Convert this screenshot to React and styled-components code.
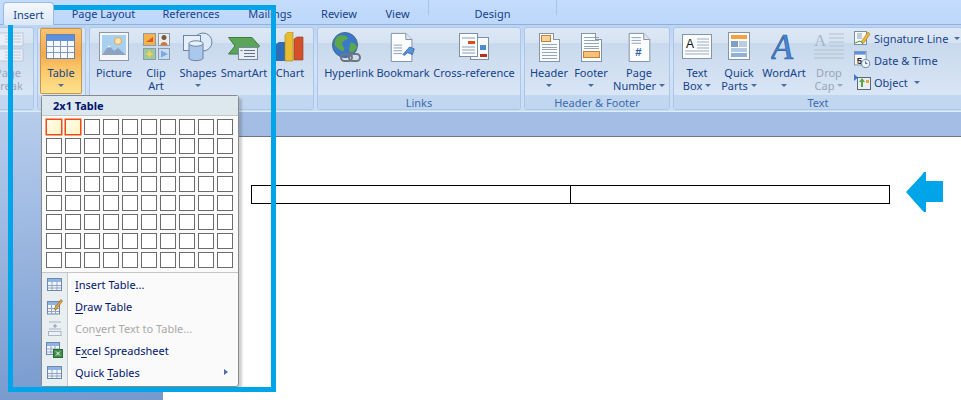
import React from "react";
import styled, { createGlobalStyle } from "styled-components";

const Global = createGlobalStyle`
  html, body { margin: 0; padding: 0; background: #fff; }
  body { width: 961px; height: 400px; overflow: hidden; font-family: "Noto Sans", "Open Sans", sans-serif; font-size: 11px; }
`;

const Shell = styled.div`
  position: relative;
  width: 961px;
  height: 400px;
  overflow: hidden;
  display: flex;
  flex-direction: column;
`;

const TabBar = styled.div`
  display: flex;
  height: 24px;
  flex: none;
  padding-left: 3px;
  background: linear-gradient(#c4dcfc, #bcd7fb);
`;

const Tab = styled.div`
  position: relative;
  width: ${(p) => p.$w}px;
  box-sizing: border-box;
  display: flex;
  align-items: center;
  justify-content: center;
  padding-top: 3px;
  color: #15428b;
  font-size: 11px;
  ${(p) => p.$active && `
    margin-top: 2px;
    height: 23px;
    z-index: 1;
    padding-top: 0;
    background: linear-gradient(#f4f8fd, #dce8f7);
    border: 1px solid #9cb9de;
    border-bottom: none;
    border-radius: 4px 4px 0 0;
  `}
  ${(p) => p.$context && `
    &::before, &::after {
      content: "";
      position: absolute;
      top: 0;
      width: 1px;
      height: 15px;
      background: #a6c3ea;
    }
    &::before { left: 0; }
    &::after { right: 0; }
  `}
`;

const Ribbon = styled.div`
  display: flex;
  gap: 3px;
  flex: none;
  height: 88px;
  box-sizing: border-box;
  padding: 2px 0 1px;
  background: linear-gradient(#bcd4f2, #d3e4f8 45%, #c9dcf4);
  border-top: 1px solid #8fb2dd;
  border-bottom: 1px solid #d6f0f4;
`;

const Group = styled.section`
  width: ${(p) => p.$w}px;
  margin-left: ${(p) => p.$ml || 0}px;
  flex: none;
  box-sizing: border-box;
  display: flex;
  flex-direction: column;
  border: 1px solid #aac6e8;
  border-radius: 3px;
  overflow: hidden;
  background: linear-gradient(#dde8f5, #d6e3f2 18%, #c9d9ed 19%, #d3e1f2 62%, #dceafa);
`;

const GroupBody = styled.div`
  flex: 1;
  display: flex;
  padding-left: ${(p) => p.$pl || 0}px;
`;

const GroupLabel = styled.div`
  flex: none;
  height: 14px;
  line-height: 15px;
  text-align: center;
  color: #3e6aaa;
  font-size: 11px;
  background: linear-gradient(#c2d8f1, #c0d6f0);
`;

const BigButton = styled.div`
  width: ${(p) => p.$w}px;
  height: 66px;
  flex: none;
  box-sizing: border-box;
  display: flex;
  flex-direction: column;
  align-items: center;
  color: ${(p) => (p.$off ? "#98a6b9" : "#15428b")};
  white-space: nowrap;
  ${(p) => p.$active && `
    background: linear-gradient(#f8c374, #f6a94f 40%, #fbc566 60%, #fde38f);
    box-shadow: inset 0 0 0 1px #c2974f;
    border-radius: 2px;
  `}
`;

const IconSlot = styled.div`
  height: 38px;
  flex: none;
  display: flex;
  align-items: center;
  justify-content: center;
  padding-bottom: 1px;
  box-sizing: border-box;
`;

const LabelLine = styled.div`
  height: 13px;
  line-height: 13px;
  font-size: 11px;
  display: flex;
  align-items: center;
  gap: 3px;
`;

const Caret = styled.span`
  width: 0;
  height: 0;
  border-left: 3px solid transparent;
  border-right: 3px solid transparent;
  border-top: 3px solid ${(p) => (p.$off ? "#9aa8bb" : "#4d6c9e")};
`;

const Stack = styled.div`
  display: flex;
  flex-direction: column;
  margin: -1px 0 0 4px;
`;

const StackRow = styled.div`
  height: 22px;
  display: flex;
  align-items: center;
  color: #15428b;
  white-space: nowrap;
  gap: 3px;
`;

const StackIcon = styled.span`
  width: 17px;
  flex: none;
  display: flex;
  justify-content: center;
`;

const StackCaret = styled(Caret)`
  margin-left: 3px;
`;

const Workspace = styled.div`
  flex: 1;
  display: flex;
  min-height: 0;
  background: linear-gradient(176deg, #b7cdec, #a0bbe3 30%, #6a8fc6);
`;

const Backstage = styled.div`
  flex: 1;
  display: flex;
  flex-direction: column;
  background: linear-gradient(#a3bde4, #9ab5dd);
  padding-top: 24px;
  margin-left: 163px;
`;

const Page = styled.div`
  flex: 1;
  background: #fff;
  border-top: 1px solid #6d7684;
  display: flex;
  align-items: flex-start;
  gap: 16px;
  padding: 35px 0 0 88px;
`;

const DocTable = styled.table`
  width: 639px;
  height: 19px;
  margin-top: 13px;
  border-collapse: collapse;
  table-layout: fixed;
  td { border: 1px solid #000; padding: 0; }
`;

const Menu = styled.div`
  position: absolute;
  left: 41px;
  top: 95px;
  width: 198px;
  height: 292px;
  box-sizing: border-box;
  background: #fafafa;
  border: 1px solid #8a8a8a;
  border-radius: 3px;
  box-shadow: 3px 3px 2px rgba(70, 70, 70, 0.25);
  display: flex;
  flex-direction: column;
`;

const MenuTitle = styled.div`
  height: 20px;
  flex: none;
  box-sizing: border-box;
  padding-left: 11px;
  line-height: 19px;
  background: #dde7ee;
  border-bottom: 1px solid #c5c5c5;
  color: #00156e;
  font-weight: 700;
  font-size: 11px;
`;

const CellGrid = styled.div`
  display: grid;
  grid-template-columns: repeat(10, 16px);
  grid-auto-rows: 16px;
  gap: 3px;
  padding: 3px 0 0 4px;
`;

const Cell = styled.div`
  box-sizing: border-box;
  background: ${(p) => (p.$on ? "linear-gradient(135deg, #fffdec, #fff3c4)" : "#fff")};
  border: 1px solid #6b6b6b;
  ${(p) => p.$on && `
    border-color: #ef4c10;
    box-shadow: 0 0 0 0.5px #ef4c10;
  `}
`;

const MenuRule = styled.div`
  height: 1px;
  flex: none;
  margin-top: 4px;
  background: #c5c5c5;
`;

const MenuList = styled.div`
  flex: 1;
  display: flex;
  flex-direction: column;
  background: linear-gradient(90deg, #e9eef0 25px, #c5c9cc 25px, #c5c9cc 26px, transparent 26px);
`;

const MenuItem = styled.div`
  height: 22px;
  display: flex;
  align-items: center;
  color: ${(p) => (p.$off ? "#a9a9a9" : "#00156e")};
  position: relative;
  u { text-underline-offset: 2px; }
`;

const MenuIcon = styled.span`
  width: 33px;
  flex: none;
  display: flex;
  justify-content: center;
  padding-right: 8px;
  box-sizing: border-box;
`;

const SubArrow = styled.span`
  position: absolute;
  right: 10px;
  border-top: 3.5px solid transparent;
  border-bottom: 3.5px solid transparent;
  border-left: 4px solid #4a6ea5;
`;

const Frame = styled.div`
  position: absolute;
  left: 8px;
  top: 5px;
  width: 268px;
  height: 387px;
  box-sizing: border-box;
  border: 5px solid #00a4e8;
  pointer-events: none;
`;

const Doc = ({ children }) => (
  <>
    <path d="M1.5 1.5H17L23.5 8V31.5H1.5Z" fill="#fbfcfe" stroke="#7d8ea5" />
    <path d="M17 1.5V8H23.5" fill="#dfe6ee" stroke="#7d8ea5" />
    {children}
  </>
);

const lines = (x1, x2, ys, color = "#8c9fb8") =>
  ys.map((y) => <path key={y} d={`M${x1} ${y}H${x2}`} stroke={color} />);

const TableGlyph = () => (
  <svg width="15" height="13" viewBox="0 0 15 13">
    <rect x=".5" y=".5" width="14" height="12" fill="#f2f6fb" stroke="#6d88ad" />
    <rect x="1" y="1" width="13" height="3" fill="#8fb4e4" />
    <path d="M1 7.500H14M1 10H14M5 4V12M10 4V12" stroke="#8ea7c9" />
  </svg>
);

const icons = {
  pageBreak: (
    <svg width="34" height="30" viewBox="0 0 34 30">
      <rect x="0" y="1" width="32" height="13" fill="#e8eef6" stroke="#bcc8d8" />
      <rect x="0" y="17" width="32" height="12" fill="#e8eef6" stroke="#bcc8d8" />
      {lines(14, 30, [4, 7, 10, 20, 23, 26], "#c0cad8")}
    </svg>
  ),
  table: (
    <svg width="30" height="26" viewBox="0 0 30 26">
      <rect x=".5" y=".5" width="28" height="24" fill="#f6f8fb" stroke="#6885ad" />
      <rect x="1" y="1" width="27" height="6" fill="#5d8fdc" />
      <path d="M1 12.500H28M1 18.500H28M7.500 7V24M14.500 7V24M21.500 7V24" stroke="#8298b8" />
    </svg>
  ),
  picture: (
    <svg width="31" height="30" viewBox="0 0 31 30">
      <rect x=".5" y=".5" width="29" height="28" fill="#f4f6f8" stroke="#8c97a5" />
      <rect x="3" y="3" width="24" height="20" fill="#a8d0f0" />
      <circle cx="19" cy="9" r="3.500" fill="#fbe7a3" stroke="#eaa05a" />
      <path d="M3 23L10 13L15 19L19 16L27 23Z" fill="#8ea3c2" />
      <path d="M8 16L10 13L12 15.500L10 15Z" fill="#fff" />
    </svg>
  ),
  clipArt: (
    <svg width="27" height="27" viewBox="0 0 27 27">
      <rect x=".5" y=".5" width="12" height="12" fill="#f3b34a" stroke="#8f9aa8" />
      <path d="M3 9L10 4V9Z" fill="#d9592a" />
      <rect x="15.500" y=".5" width="11" height="12" fill="#e9eef4" stroke="#8f9aa8" />
      <circle cx="21" cy="4.500" r="2.500" fill="#7a5a3a" />
      <path d="M17.500 12C17.500 8 24.500 8 24.500 12Z" fill="#d9732a" />
      <rect x=".5" y="15.500" width="12" height="11" fill="#9cc99b" stroke="#8f9aa8" />
      <path d="M6.500 17L8 20L11 21L8 22L6.500 25L5 22L2 21L5 20Z" fill="#f2d35e" />
      <rect x="15.500" y="15.500" width="11" height="11" fill="#c4dcf5" stroke="#8f9aa8" />
      <path d="M18 17.500L25 21L18 24.500Z" fill="#7ba9e0" />
    </svg>
  ),
  shapes: (
    <svg width="30" height="30" viewBox="0 0 30 30">
      <circle cx="20" cy="10" r="9" fill="#dce9f7" stroke="#6c84a5" />
      <rect x=".5" y="3.500" width="17" height="15" fill="#e6eef8" stroke="#6c84a5" />
      <path d="M6 11.500V26C6 29.500 20 29.500 20 26V11.500Z" fill="#a9c8ec" stroke="#6c84a5" />
      <ellipse cx="13" cy="11.500" rx="7" ry="2.700" fill="#e8f1fb" stroke="#6c84a5" />
    </svg>
  ),
  smartArt: (
    <svg width="32" height="26" viewBox="0 0 32 26">
      <path d="M.5 3.500H24L31.500 12L24 20H.5L7 12Z" fill="#5aa55a" stroke="#3e7e3e" />
      <rect x="10.500" y="13.500" width="19" height="12" fill="#e7ecf2" stroke="#7a8a9e" />
      {lines(16, 27, [16.5, 19.5, 22.5], "#5c7391")}
      <rect x="12.500" y="16" width="2" height="1" fill="#5c7391" />
    </svg>
  ),
  chart: (
    <svg width="28" height="30" viewBox="0 0 28 30">
      <path d="M0 12L3 10H9V29H0Z" fill="#2f6cb8" />
      <path d="M9 3L12 0H17V29H9Z" fill="#e9bb2e" stroke="#a8851c" strokeWidth=".6" />
      <path d="M18 7L21 5H27V28H18Z" fill="#d4502a" stroke="#9b3618" strokeWidth=".6" />
    </svg>
  ),
  hyperlink: (
    <svg width="34" height="30" viewBox="0 0 34 30">
      <circle cx="13" cy="13" r="12.500" fill="#3a78c8" stroke="#46648c" />
      <path d="M4 6C8 2 13 3 16 6C14 9 11 8 10 11C10 14 13 15 12 19C9 20 6 16 3 14C2 11 3 8 4 6ZM18 11C21 10 24 12 25 15C24 19 20 21 18 20C16 17 19 14 18 11Z" fill="#5ea64a" />
      <rect x="9" y="22" width="11" height="7" rx="3.500" fill="none" stroke="#6e7680" strokeWidth="2" />
      <rect x="17" y="22" width="11" height="7" rx="3.500" fill="none" stroke="#6e7680" strokeWidth="2" />
    </svg>
  ),
  bookmark: (
    <svg width="28" height="30" viewBox="0 0 28 32">
      <Doc>
        {lines(4, 13, [14, 17, 20, 23])}
        <path d="M14 24L21 16L26 18L24 24L19 22L15 25Z" fill="#5b93d6" stroke="#396fae" />
      </Doc>
    </svg>
  ),
  crossRef: (
    <svg width="31" height="27" viewBox="0 0 31 27">
      <rect x="11.500" y="4.500" width="18" height="22" fill="#f8f9fb" stroke="#7d8ea5" />
      <rect x="21" y="21" width="7" height="3" fill="#b9301a" />
      <path d="M21 12H27V17H21Z" fill="#4a8ad0" />
      <rect x=".5" y=".5" width="18" height="23" fill="#fbfcfe" stroke="#7d8ea5" />
      <rect x="9" y="8" width="7" height="3" fill="#df4a1c" />
      {lines(3, 16, [5, 14, 17, 20])}
    </svg>
  ),
  header: (
    <svg width="25" height="30" viewBox="0 0 25 32" shapeRendering="crispEdges">
      <Doc>
        <rect x="4" y="4" width="10" height="6" fill="#f5d49a" stroke="#c6782a" />
        {lines(4, 21, [13, 16, 19, 22, 25, 28])}
      </Doc>
    </svg>
  ),
  footer: (
    <svg width="25" height="30" viewBox="0 0 25 32" shapeRendering="crispEdges">
      <Doc>
        {lines(4, 21, [6, 9, 12, 15, 18])}
        <rect x="4" y="21" width="17" height="6" fill="#f5c27a" stroke="#c6782a" />
      </Doc>
    </svg>
  ),
  pageNumber: (
    <svg width="25" height="30" viewBox="0 0 25 32">
      <Doc>
        {lines(4, 14, [6, 9, 12])}
        <text x="8" y="26" fontFamily="Liberation Sans" fontWeight="700" fontSize="12" fill="#2d5da3">#</text>
      </Doc>
    </svg>
  ),
  textBox: (
    <svg width="31" height="26" viewBox="0 0 31 26">
      <rect x=".5" y=".5" width="29" height="24" fill="#fafbfc" stroke="#8795a8" />
      <text x="4" y="14" fontFamily="Liberation Sans" fontSize="12" fill="#111">A</text>
      {lines(15, 27, [5, 8, 11, 14], "#9bacc0")}
      {lines(3, 27, [17, 20], "#9bacc0")}
    </svg>
  ),
  quickParts: (
    <svg width="23" height="29" viewBox="0 0 23 29">
      <rect x=".5" y=".5" width="21" height="27" fill="#f8fafc" stroke="#8795a8" />
      <rect x="3" y="3" width="16" height="4" fill="#f2a33c" />
      <rect x="3" y="9" width="7" height="6" fill="#7f9fc4" />
      {lines(11, 19, [10, 12, 14], "#7f9fc4")}
      {lines(3, 19, [17, 19], "#6f96c8")}
      <rect x="3" y="21" width="16" height="4" fill="#8fb0d8" />
    </svg>
  ),
  wordArt: (
    <svg width="26" height="30" viewBox="0 0 26 30">
      <text x="0" y="27" fontFamily="Liberation Serif" fontStyle="italic" fontSize="36" fill="#4a86d0" stroke="#2c5d9e" strokeWidth=".7">A</text>
    </svg>
  ),
  dropCap: (
    <svg width="31" height="30" viewBox="0 0 31 30">
      <text x="0" y="14" fontFamily="Liberation Serif" fontSize="17" fill="#a8b4c4">A</text>
      {lines(15, 30, [2, 6, 10, 14], "#b5c0cf")}
      {lines(0, 30, [18, 22, 26], "#b5c0cf")}
    </svg>
  ),
  signature: (
    <svg width="17" height="16" viewBox="0 0 17 16">
      <rect x=".5" y="1.500" width="12" height="13" fill="#f7f8fa" stroke="#7d8ea5" />
      {lines(3, 8, [4, 6, 8], "#8c9fb8")}
      <path d="M7 12L14 2L16 4L10 13Z" fill="#e8b93a" stroke="#a8791c" strokeWidth=".6" />
      <path d="M1 13L6 11L9 14" fill="none" stroke="#4e9a3a" />
    </svg>
  ),
  date: (
    <svg width="19" height="20" viewBox="0 0 19 20">
      <rect x=".5" y=".5" width="13" height="15" fill="#f7f8fa" stroke="#7d8ea5" />
      <rect x="1" y="1" width="12" height="3" fill="#5d8fdc" />
      <text x="3" y="14" fontFamily="Liberation Sans" fontWeight="700" fontSize="11" fill="#222">5</text>
      <circle cx="13" cy="14" r="4.500" fill="#eef3f9" stroke="#5a7ca8" />
      <path d="M13 11.500V14H15" fill="none" stroke="#33527c" />
    </svg>
  ),
  object: (
    <svg width="17" height="17" viewBox="0 0 17 17">
      <path d="M0 0L4 3.500L0 7Z" fill="#3f78c9" />
      <rect x="3.500" y="3.500" width="13" height="12" fill="#e9eef4" stroke="#5b6a7d" />
      <path d="M8 4L11 8H9V13H7V8H5Z" fill="#5aa53e" />
      <rect x="12" y="6" width="3" height="3" fill="#e4a83a" />
    </svg>
  ),
  draw: (
    <svg width="16" height="17" viewBox="0 0 16 17">
      <rect x=".5" y="3.500" width="12" height="12.500" fill="#f2f6fb" stroke="#6d88ad" />
      <rect x="1" y="4" width="11" height="3" fill="#8fb4e4" />
      <path d="M1 10.500H12M1 13.500H12M4.500 7V16M8.500 7V16" stroke="#8ea7c9" />
      <path d="M7 11L14 1.500L15.500 3L9 12Z" fill="#e8a63a" stroke="#8a5a1a" strokeWidth=".6" />
    </svg>
  ),
  convert: (
    <svg width="14" height="15" viewBox="0 0 14 15">
      {lines(1, 13, [1], "#a8b6c8")}
      <path d="M7 3V7M5 5H9" stroke="#8a99ac" />
      {lines(1, 13, [8], "#a8b6c8")}
      <rect x=".5" y="10.500" width="12.500" height="4" fill="#eef1f5" stroke="#a8b6c8" />
    </svg>
  ),
  excel: (
    <svg width="17" height="16" viewBox="0 0 17 16">
      <rect x=".5" y=".5" width="13" height="12" fill="#f2f6fb" stroke="#6d88ad" />
      <rect x="1" y="1" width="12" height="3" fill="#8fb4e4" />
      <path d="M1 7H13M1 10H13M5 4V13M9 4V13" stroke="#8ea7c9" />
      <rect x="7.500" y="7.500" width="9" height="8" fill="#3f8f4a" stroke="#2a6a34" />
      <path d="M10 9.500L14 13.500M14 9.500L10 13.500" stroke="#fff" />
    </svg>
  ),
};

const groups = [
  { w: 54, ml: -20, pl: 3, label: "", items: [{ w: 48, icon: "pageBreak", lines: ["Page", "Break"], off: true }] },
  { w: 49, pl: 2, label: "Tables", items: [{ w: 42, icon: "table", lines: ["Table", ""], active: true }] },
  {
    w: 225, label: "Illustrations", items: [
      { w: 48, icon: "picture", lines: ["Picture"] },
      { w: 36, icon: "clipArt", lines: ["Clip", "Art"] },
      { w: 48, icon: "shapes", lines: ["Shapes", ""] },
      { w: 44, icon: "smartArt", lines: ["SmartArt"] },
      { w: 48, icon: "chart", lines: ["Chart"] },
    ],
  },
  {
    w: 204, pl: 2, label: "Links", items: [
      { w: 58, icon: "hyperlink", lines: ["Hyperlink"] },
      { w: 50, icon: "bookmark", lines: ["Bookmark"] },
      { w: 92, icon: "crossRef", lines: ["Cross-reference"] },
    ],
  },
  {
    w: 146, pl: 3, label: "Header & Footer", items: [
      { w: 42, icon: "header", lines: ["Header", ""] },
      { w: 42, icon: "footer", lines: ["Footer", ""] },
      { w: 54, icon: "pageNumber", lines: ["Page", "Number^"] },
    ],
  },
  {
    w: 290, pl: 2, label: "Text", items: [
      { w: 42, icon: "textBox", lines: ["Text", "Box^"] },
      { w: 42, icon: "quickParts", lines: ["Quick", "Parts^"] },
      { w: 48, icon: "wordArt", lines: ["WordArt", ""] },
      { w: 42, icon: "dropCap", lines: ["Drop", "Cap^"], off: true },
    ],
    stack: [
      { icon: "signature", text: "Signature Line" },
      { icon: "date", text: "Date & Time" },
      { icon: "object", text: "Object" },
    ],
  },
];

const Label = ({ text, off }) => {
  const dropped = text === "" || text.endsWith("^");
  const word = text.replace("^", "");
  return (
    <LabelLine>
      {word}
      {dropped && <Caret $off={off} />}
    </LabelLine>
  );
};

const App = () => {
  const cells = Array.from({ length: 80 });
  return (
    <Shell>
      <Global />
      <TabBar>
        <Tab $w={51} $active>Insert</Tab>
        <Tab $w={99}>Page Layout</Tab>
        <Tab $w={76}>References</Tab>
        <Tab $w={82}>Mailings</Tab>
        <Tab $w={56}>Review</Tab>
        <Tab $w={61}>View</Tab>
        <Tab $w={129} $context>Design</Tab>
      </TabBar>

      <Ribbon>
        {groups.map((g) => (
          <Group key={g.label || "pages"} $w={g.w} $ml={g.ml}>
            <GroupBody $pl={g.pl}>
              {g.items.map((b) => (
                <BigButton key={b.icon} $w={b.w} $off={b.off} $active={b.active}>
                  <IconSlot>{icons[b.icon]}</IconSlot>
                  {b.lines.map((t, i) => (
                    <Label key={i} text={t} off={b.off} />
                  ))}
                </BigButton>
              ))}
              {g.stack && (
                <Stack>
                  {g.stack.map((r, i) => (
                    <StackRow key={r.text}>
                      <StackIcon>{icons[r.icon]}</StackIcon>
                      {r.text}
                      {i !== 1 && <StackCaret />}
                    </StackRow>
                  ))}
                </Stack>
              )}
            </GroupBody>
            <GroupLabel>{g.label}</GroupLabel>
          </Group>
        ))}
      </Ribbon>

      <Workspace>
        <Backstage>
          <Page>
            <DocTable>
              <tbody>
                <tr>
                  <td />
                  <td />
                </tr>
              </tbody>
            </DocTable>
            <svg width="38" height="40" viewBox="0 0 38 40">
              <path d="M0 20L15 4L18 0H20V9H37V30H20V40H18L15 37Z" fill="#00a4e8" />
            </svg>
          </Page>
        </Backstage>
      </Workspace>

      <Menu>
        <MenuTitle>2x1 Table</MenuTitle>
        <CellGrid>
          {cells.map((_, i) => (
            <Cell key={i} $on={i < 2} />
          ))}
        </CellGrid>
        <MenuRule />
        <MenuList>
          <MenuItem>
            <MenuIcon><TableGlyph /></MenuIcon>
            <span><u>I</u>nsert Table...</span>
          </MenuItem>
          <MenuItem>
            <MenuIcon>{icons.draw}</MenuIcon>
            <span><u>D</u>raw Table</span>
          </MenuItem>
          <MenuItem $off>
            <MenuIcon>{icons.convert}</MenuIcon>
            <span>Con<u>v</u>ert Text to Table...</span>
          </MenuItem>
          <MenuItem>
            <MenuIcon>{icons.excel}</MenuIcon>
            <span>E<u>x</u>cel Spreadsheet</span>
          </MenuItem>
          <MenuItem>
            <MenuIcon><TableGlyph /></MenuIcon>
            <span>Quick <u>T</u>ables</span>
            <SubArrow />
          </MenuItem>
        </MenuList>
      </Menu>

      <Frame />
    </Shell>
  );
};

export default App;
